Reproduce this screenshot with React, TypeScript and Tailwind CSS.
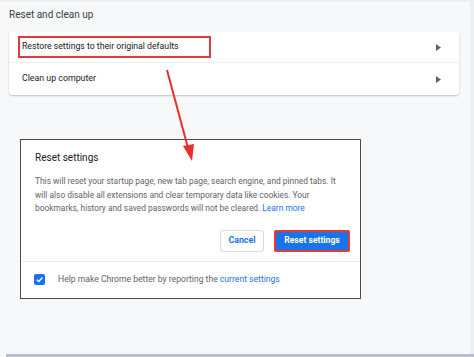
import React from "react";

const font = { fontFamily: "Roboto, 'Liberation Sans', sans-serif" };

function Tri() {
  return (
    <svg width="5" height="7" viewBox="0 0 5 7" className="mr-[18px]">
      <path d="M0 0 L5 3.5 L0 7 Z" fill="#5f6368" />
    </svg>
  );
}

export default function App() {
  return (
    <div
      className="relative w-[474px] h-[357px] overflow-hidden bg-[#f7f8fa] flex flex-col"
      style={font}
    >
      <div className="h-[2px] bg-[#eceef1] shrink-0" />
      <div className="flex flex-1 min-h-0">
        <div className="flex-1 flex flex-col">
          <div className="pl-[9px] pt-[5px] h-[30px] text-[10px] leading-[16px] text-[#3c4043]">
            Reset and clean up
          </div>
          <div className="ml-[9px] w-[450px] bg-white rounded-[3px] shadow-[0_1px_2px_rgba(60,64,67,0.3)] flex flex-col">
            <div className="h-[31px] flex items-center justify-between border-b border-[#eceef0]">
              <div className="ml-[9px] h-[22px] w-[193px] border-2 border-[#e03a3a] flex items-center pl-[2px] text-[8.7px] text-[#202124]">
                Restore settings to their original defaults
              </div>
              <Tri />
            </div>
            <div className="h-[32px] flex items-center justify-between">
              <div className="ml-[13px] text-[8.8px] text-[#202124]">Clean up computer</div>
              <Tri />
            </div>
          </div>
          <div className="ml-[20px] mt-[44px] w-[341px] h-[160px] bg-white border-[1.5px] border-[#4b4b4b] flex flex-col">
            <div className="pl-[14px] pt-[10px] text-[10px] leading-[16px] text-[#202124]">
              Reset settings
            </div>
            <div className="pl-[14px] mt-[9px] text-[8.4px] leading-[13.5px] text-[#5f6368] whitespace-nowrap">
              This will reset your startup page, new tab page, search engine, and pinned tabs. It
              <br />
              will also disable all extensions and clear temporary data like cookies. Your
              <br />
              bookmarks, history and saved passwords will not be cleared.{" "}
              <span className="text-[#1a73e8]">Learn more</span>
            </div>
            <div className="mt-[14px] flex justify-end gap-[10px] pr-[10px]">
              <div className="h-[22px] w-[44px] border border-[#dadce0] rounded-[3px] flex items-center justify-center text-[8.8px] font-bold text-[#1a73e8]">
                Cancel
              </div>
              <div className="h-[22px] w-[76px] bg-[#1a73e8] border-2 border-[#e53935] rounded-[2px] flex items-center justify-center text-[8.6px] font-bold text-white">
                Reset settings
              </div>
            </div>
            <div className="mt-[9px] border-t border-[#e8eaed] flex-1 flex items-center pl-[13px]">
              <div className="w-[11px] h-[11px] bg-[#1a73e8] rounded-[2px] flex items-center justify-center">
                <svg width="9" height="9" viewBox="0 0 10 10">
                  <path d="M2 5.2 L4.2 7.3 L8.2 2.8" stroke="white" strokeWidth="1.6" fill="none" />
                </svg>
              </div>
              <div className="ml-[13px] text-[8.6px] text-[#5f6368]">
                Help make Chrome better by reporting the{" "}
                <span className="text-[#1a73e8]">current settings</span>
              </div>
            </div>
          </div>
        </div>
        <div className="w-[4px] bg-[#eceef1] shrink-0" />
      </div>
      <div className="h-[3px] bg-[#b9bec7] shrink-0 ml-[6px]" />
      <svg
        className="absolute left-0 top-0 pointer-events-none"
        width="474"
        height="357"
      >
        <line x1="167" y1="70" x2="188" y2="148" stroke="#e8302a" strokeWidth="2" />
        <path d="M183 146 L192 161 L194 144 Z" fill="#e8302a" />
      </svg>
    </div>
  );
}
